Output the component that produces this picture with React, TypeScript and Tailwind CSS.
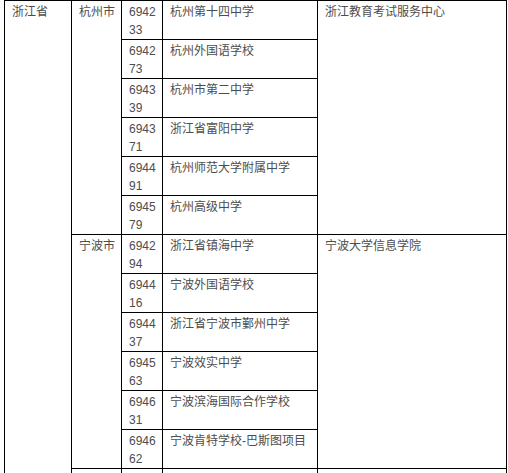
const groups = [
  {
    city: '杭州市',
    center: '浙江教育考试服务中心',
    schools: [
      ['6942', '33', '杭州第十四中学'],
      ['6942', '73', '杭州外国语学校'],
      ['6943', '39', '杭州市第二中学'],
      ['6943', '71', '浙江省富阳中学'],
      ['6944', '91', '杭州师范大学附属中学'],
      ['6945', '79', '杭州高级中学'],
    ],
  },
  {
    city: '宁波市',
    center: '宁波大学信息学院',
    schools: [
      ['6942', '94', '浙江省镇海中学'],
      ['6944', '16', '宁波外国语学校'],
      ['6944', '37', '浙江省宁波市鄞州中学'],
      ['6945', '63', '宁波效实中学'],
      ['6946', '31', '宁波滨海国际合作学校'],
      ['6946', '62', '宁波肯特学校-巴斯图项目'],
    ],
  },
];

const cell = 'border border-black align-top px-[7px] pt-[2px] pb-0 whitespace-nowrap';

const App = () => {
  return (
    <div
      className="bg-white h-[473px] overflow-hidden pl-[4px] text-[12px] leading-[18px] text-[#4d4d4d]"
      style={{ fontFamily: '"Liberation Sans", "Noto Sans CJK SC", sans-serif' }}
    >
      <table className="table-fixed border-collapse w-[502px]">
        <colgroup>
          <col className="w-[67px]" />
          <col className="w-[50px]" />
          <col className="w-[41px]" />
          <col className="w-[155px]" />
          <col className="w-[189px]" />
        </colgroup>
        <tbody>
          {groups.map((g, gi) =>
            g.schools.map((s, si) => (
              <tr key={`${gi}-${si}`} className="h-[39px]">
                {gi === 0 && si === 0 && (
                  <td rowSpan={13} className={cell}>浙江省</td>
                )}
                {si === 0 && (
                  <td rowSpan={g.schools.length} className={cell}>{g.city}</td>
                )}
                <td className={cell}>
                  {s[0]}
                  <br />
                  {s[1]}
                </td>
                <td className={cell}>{s[2]}</td>
                {si === 0 && (
                  <td rowSpan={g.schools.length} className={cell}>{g.center}</td>
                )}
              </tr>
            ))
          )}
          <tr className="h-[39px]">
            <td className={cell}></td>
            <td className={cell}></td>
            <td className={cell}></td>
            <td className={cell}></td>
          </tr>
        </tbody>
      </table>
    </div>
  );
};

export default App;
